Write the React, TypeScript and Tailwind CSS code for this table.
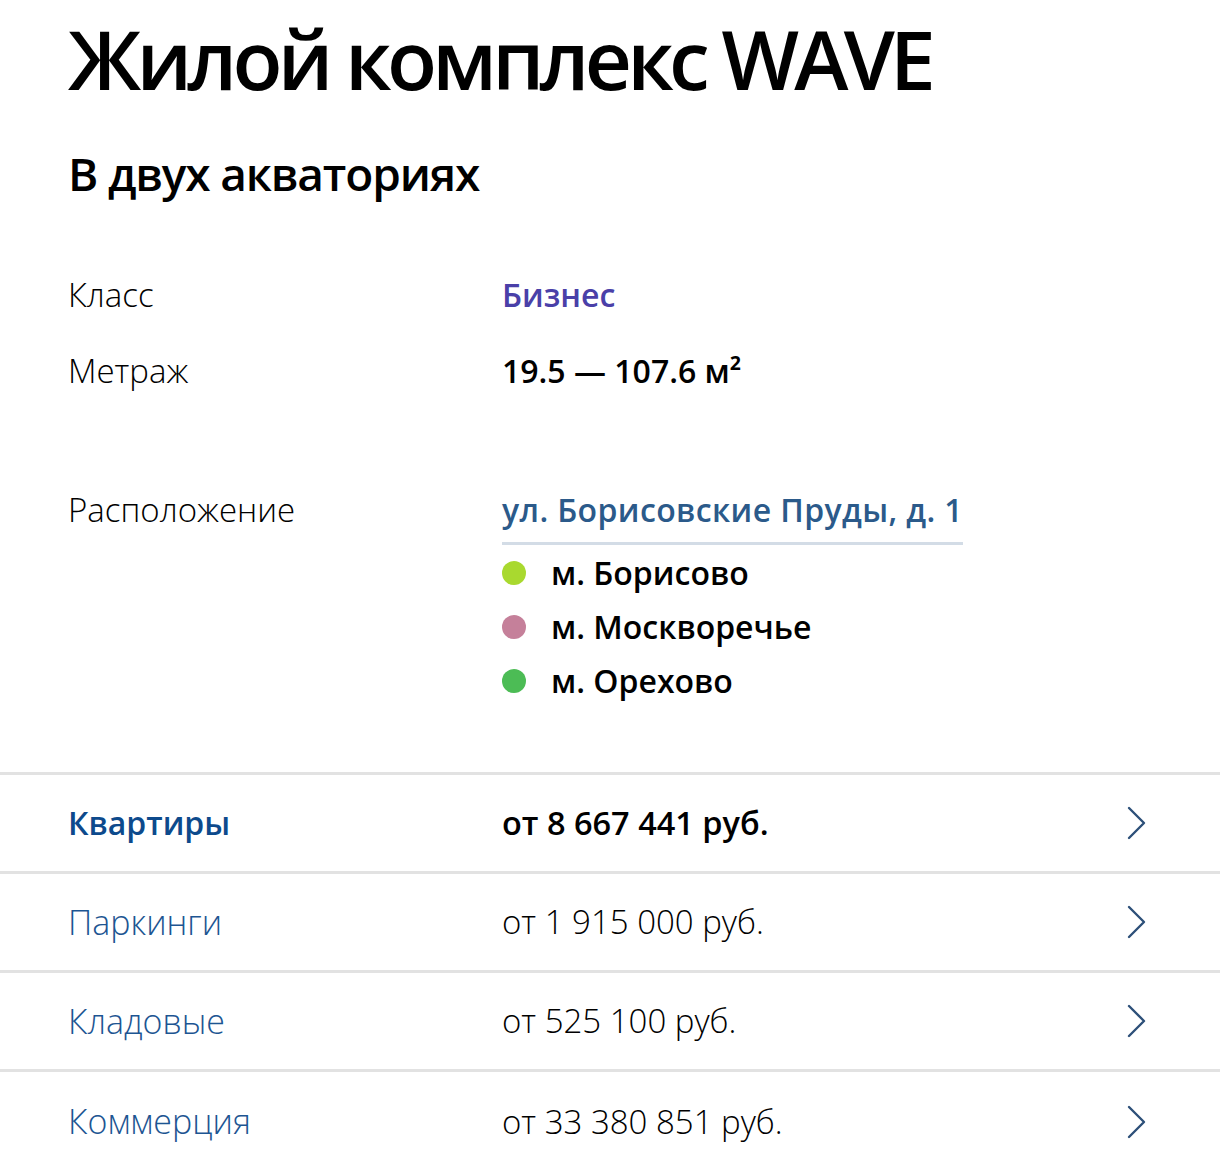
import React from "react"

type Metro = { name: string; color: string }

const metros: Metro[] = [
  { name: "м. Борисово", color: "bg-[#a9d92f]" },
  { name: "м. Москворечье", color: "bg-[#c5809a]" },
  { name: "м. Орехово", color: "bg-[#4cbc55]" },
]

type PriceRow = { title: string; price: string; bold?: boolean }

const rows: PriceRow[] = [
  { title: "Квартиры", price: "от 8 667 441 руб.", bold: true },
  { title: "Паркинги", price: "от 1 915 000 руб." },
  { title: "Кладовые", price: "от 525 100 руб." },
  { title: "Коммерция", price: "от 33 380 851 руб." },
]

function Chevron(): React.ReactElement {
  return (
    <svg width="22" height="34" viewBox="0 0 22 34" fill="none" className="shrink-0">
      <path d="M3 2 L18 17 L3 32" stroke="#2d5079" strokeWidth="2.4" strokeLinecap="round" strokeLinejoin="round" />
    </svg>
  )
}

export default function App(): React.ReactElement {
  return (
    <div className="min-h-screen bg-white font-['Open_Sans',sans-serif] text-black">
      {/* Header */}
      <div className="px-[68px]">
        <h1 className="text-[82px] font-semibold leading-[116px] tracking-[-0.058em]">
          Жилой комплекс WAVE
        </h1>
        <h2 className="mt-[27px] text-[46px] font-semibold leading-[60px] tracking-[-0.025em]">
          В двух акваториях
        </h2>

        {/* Details */}
        <div className="mt-[70px] grid grid-cols-[434px_1fr] text-[32px] leading-[44px]">
          <div className="text-[33px] font-light">Класс</div>
          <div className="font-semibold text-[#4a40a8]">Бизнес</div>

          <div className="mt-[32px] text-[33px] font-light">Метраж</div>
          <div className="mt-[32px] font-semibold">19.5 — 107.6 м²</div>

          <div className="mt-[95px] text-[33px] font-light">Расположение</div>
          <div className="mt-[95px]">
            <div className="inline-block border-b-[3px] border-[#d3dce6] pb-[10px] font-semibold tracking-[0.012em] text-[#2b5a8a]">
              ул. Борисовские Пруды, д. 1
            </div>
            <ul className="mt-px">
              {metros.map((m) => (
                <li key={m.name} className="flex h-[54px] items-center">
                  <span className={`h-6 w-6 rounded-full ${m.color}`} />
                  <span className="ml-[25px] font-semibold">{m.name}</span>
                </li>
              ))}
            </ul>
          </div>
        </div>
      </div>

      {/* Prices */}
      <div className="mt-[64px] border-t-[3px] border-[#e2e2e2]">
        {rows.map((r) => (
          <a
            key={r.title}
            href="#"
            className="grid h-[99px] grid-cols-[434px_1fr_auto] items-center border-b-[3px] border-[#e2e2e2] pl-[68px] pr-[72px] last:border-b-0"
          >
            <span className={r.bold ? "text-[32px] font-semibold text-[#0d4a8c]" : "text-[34px] font-light text-[#1d5592]"}>
              {r.title}
            </span>
            <span className={r.bold ? "text-[32.5px] font-semibold" : "text-[33px] font-light"}>{r.price}</span>
            <Chevron />
          </a>
        ))}
      </div>
    </div>
  )
}
